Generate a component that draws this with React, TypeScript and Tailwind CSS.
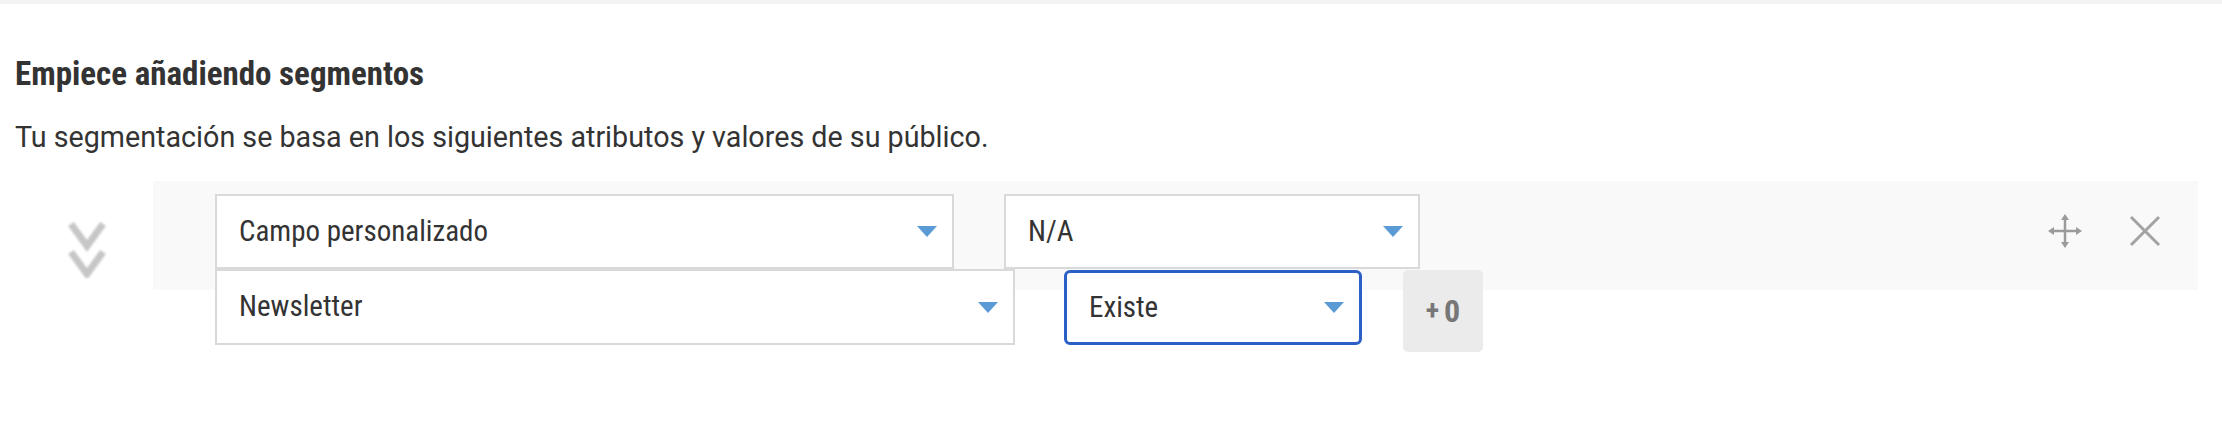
const Caret = () => (
  <svg width="20" height="11" viewBox="0 0 20 11" className="shrink-0">
    <polygon points="0,0 20,0 10,11" fill="#5b9bd5" />
  </svg>
);

const SelectBox = ({ label, className }: { label: string; className: string }) => (
  <div
    className={`flex items-center justify-between bg-white pl-[22px] pr-[15px] text-[29px] font-stretch-[80%] text-[#333] ${className}`}
  >
    <span>{label}</span>
    <Caret />
  </div>
);

const MoveIcon = () => (
  <svg width="36" height="34" viewBox="0 0 36 34" fill="#9b9b9b" stroke="#9b9b9b">
    <line x1="5" y1="17" x2="31" y2="17" strokeWidth="2.5" />
    <line x1="18" y1="4" x2="18" y2="30" strokeWidth="2.5" />
    <polygon points="1,17 7,13 7,21" stroke="none" />
    <polygon points="35,17 29,13 29,21" stroke="none" />
    <polygon points="18,0 14,6 22,6" stroke="none" />
    <polygon points="18,34 14,28 22,28" stroke="none" />
  </svg>
);

const CloseIcon = () => (
  <svg width="32" height="32" viewBox="0 0 32 32" stroke="#a3a3a3" strokeWidth="3">
    <line x1="2" y1="2" x2="30" y2="30" />
    <line x1="30" y1="2" x2="2" y2="30" />
  </svg>
);

const Chevrons = () => (
  <svg
    width="38"
    height="56"
    viewBox="0 0 38 56"
    fill="none"
    stroke="#c6c6c6"
    strokeWidth="7"
    className="blur-[0.8px]"
  >
    <polyline points="3,2 19,24 35,2" />
    <polyline points="3,30 19,52 35,30" />
  </svg>
);

export default function App() {
  return (
    <div className="min-h-screen bg-white font-['Roboto',sans-serif] text-[#333]">
      <div className="h-1 bg-[#f2f4f3]" />

      {/* Intro */}
      <div className="pl-[15px] pt-[52px]">
        <h2 className="text-[33px] leading-[36px] font-bold font-stretch-[80%]">
          Empiece añadiendo segmentos
        </h2>
        <p className="mt-[27px] text-[28.7px] leading-[36px] font-stretch-[90%]">
          Tu segmentación se basa en los siguientes atributos y valores de su público.
        </p>
      </div>

      {/* Segment */}
      <div className="mt-[26px] flex pr-[24px]">
        <div className="w-[153px] shrink-0 pl-[68px] pt-[41px]">
          <Chevrons />
        </div>

        <div className="flex-1">
          <div className="flex h-[109px] items-start bg-[#f9f9f9] pl-[62px] pr-[37px] pt-[13px]">
            <SelectBox
              label="Campo personalizado"
              className="h-[75px] w-[739px] border-2 border-[#d9d9d9]"
            />
            <SelectBox
              label="N/A"
              className="ml-[50px] h-[75px] w-[416px] border-2 border-[#d9d9d9]"
            />
            <div className="ml-auto flex items-center gap-[46px] pt-[20px]">
              <MoveIcon />
              <CloseIcon />
            </div>
          </div>

          <div className="-mt-[21px] flex items-start pl-[62px]">
            <SelectBox
              label="Newsletter"
              className="h-[76px] w-[800px] border-2 border-[#d9d9d9]"
            />
            <SelectBox
              label="Existe"
              className="ml-[49px] mt-px h-[75px] w-[298px] rounded-[6px] border-[3px] border-[#2b5fc7]"
            />
            <button className="ml-[41px] mt-px flex h-[82px] w-[80px] items-center justify-center gap-[5px] rounded-[5px] bg-[#ebebeb] font-bold text-[#777] font-stretch-[80%]">
              <span className="text-[28px]">+</span>
              <span className="text-[32px]">0</span>
            </button>
          </div>
        </div>
      </div>
    </div>
  );
}
